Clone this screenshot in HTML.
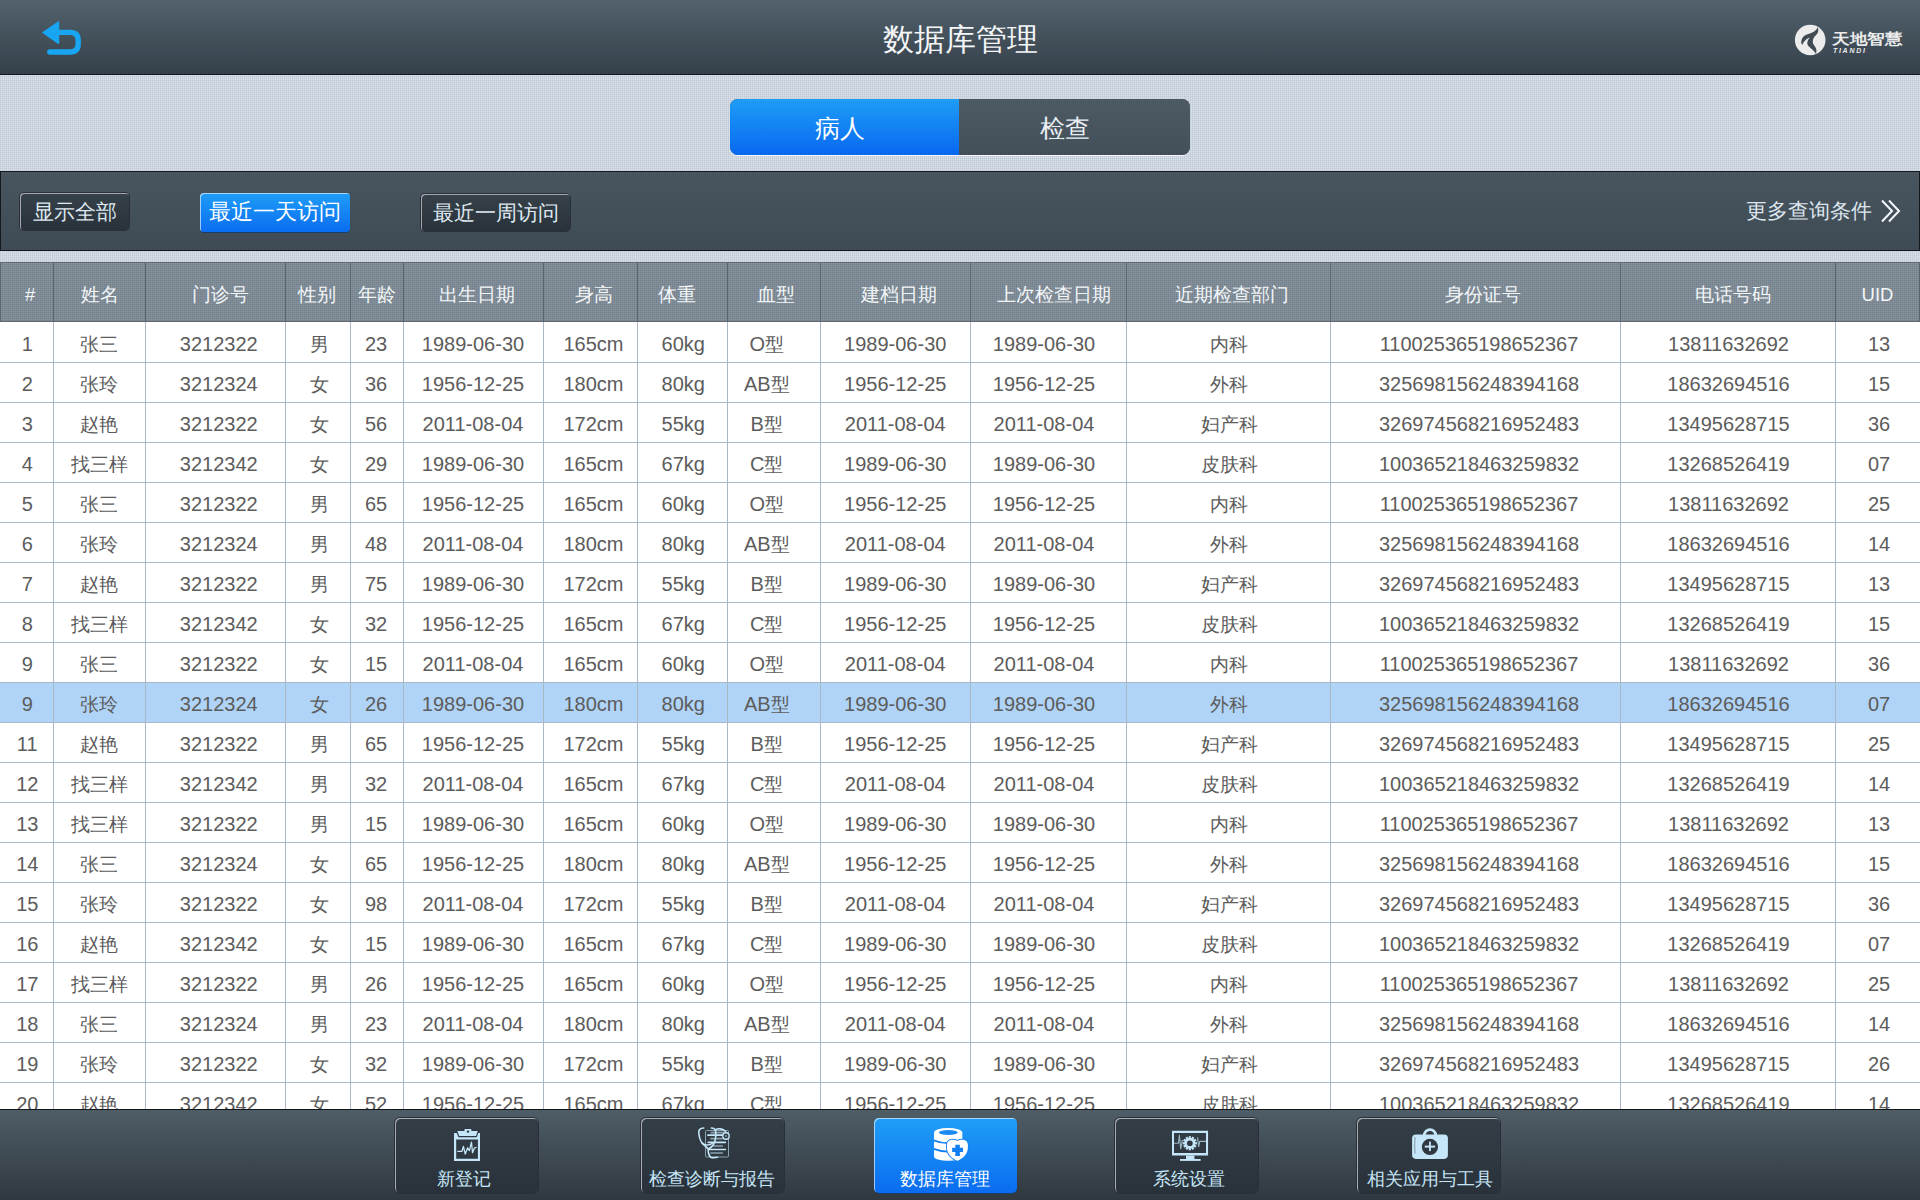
<!DOCTYPE html>
<html><head><meta charset="utf-8">
<style>
*{box-sizing:border-box;margin:0;padding:0}
html,body{width:1920px;height:1200px;overflow:hidden;background:#d0d8e1;font-family:"Liberation Sans",sans-serif}
.abs{position:absolute}
#top{position:absolute;left:0;top:0;width:1920px;height:75px;background:linear-gradient(#52626d,#35404a);border-bottom:1px solid #171b1f}
#title{position:absolute;left:0;top:0;width:1920px;height:75px;line-height:80px;text-align:center;color:#f4f6f8;font-size:31px}
#tex1,#tex2{position:absolute;left:0;top:75px;width:1920px;height:96px;background-color:#d9e1ea;
 background-image:repeating-linear-gradient(90deg,rgba(0,20,60,.06) 0 1px,transparent 1px 2px),repeating-linear-gradient(0deg,rgba(0,20,60,.06) 0 1px,transparent 1px 2px)}
#seg{position:absolute;left:730px;top:99px;width:460px;height:56px;border-radius:8px;overflow:hidden;background:#48545e;box-shadow:0 1px 0 rgba(255,255,255,.8)}
#seg .l{position:absolute;left:0;top:0;width:229px;height:56px;background:linear-gradient(#1e9df6,#0868f0);color:#fff;text-align:center;line-height:58px;font-size:25px;padding-right:9px}
#seg .r{position:absolute;left:229px;top:0;width:231px;height:56px;background:linear-gradient(#4d5963,#434f59);color:#e9eef2;text-align:center;line-height:58px;font-size:25px;padding-right:19px}
#fbar{position:absolute;left:0;top:171px;width:1920px;height:80px;background:linear-gradient(#48555f,#3f4b54);border-top:1px solid #15191c;border-bottom:1px solid #15191c;border-left:1px solid #15191c;border-right:1px solid #15191c}
.btn{position:absolute;height:37px;border-radius:4px;background:linear-gradient(#36414a,#29323a);box-shadow:inset 1px 1px 0 #a3a8ad, 0 0 0 1px #2b2f3a;color:#dfe8f0;font-size:21px;text-align:center;line-height:38px}
.btn.blue{background:linear-gradient(#1f9df7,#0a6df0);box-shadow:inset 1px 1px 0 rgba(255,255,255,.6), 0 1px 0 #1b3d66;color:#fff}
#more{position:absolute;left:1746px;top:196px;font-size:21px;color:#dde6ee;line-height:30px}
#tex2{top:251px;height:11px}
#thead{position:absolute;left:0;top:262px;width:1920px;height:60px;background-color:#87949e;background-image:repeating-linear-gradient(90deg,rgba(0,10,30,.07) 0 1px,transparent 1px 2px),repeating-linear-gradient(0deg,rgba(0,10,30,.07) 0 1px,transparent 1px 2px);border-top:1px solid #666c71;border-bottom:1px solid #62686e}
.hvl{position:absolute;top:0;width:1px;height:58px;background:#5f656b}
.hc{position:absolute;top:0;height:58px;line-height:64px;text-align:center;color:#f3f6f8;font-size:18.5px}
#tbody{position:absolute;left:0;top:322px;width:1920px;height:787px;background:#fff;overflow:hidden}
.row{position:absolute;left:0;width:1920px;height:40px;border-bottom:1px solid #a8b8c6}
.row.hl{background:#b0d4f7}
.c{position:absolute;top:0;height:39px;line-height:42px;text-align:center;color:#5c5c5c;font-size:20px;white-space:nowrap}
.c b{font-weight:normal;font-size:19px}
.vl{position:absolute;top:0;width:1px;height:787px;background:#a8b8c6}
#bbar{position:absolute;left:0;top:1109px;width:1920px;height:91px;background:linear-gradient(#4f5d67,#2f383f);border-top:1px solid #121518}
.nb{position:absolute;top:8px;width:143px;height:75px;border-radius:5px;background:linear-gradient(#343e47,#29323a);box-shadow:inset 1px 1px 0 #a7acb1, 0 0 0 1px #2a2e38;color:#c6e6f8;font-size:17.5px;text-align:center}
.nb.blue{background:linear-gradient(#1f9ef7,#0a6cf0);box-shadow:inset 1px 1px 0 rgba(255,255,255,.6),0 1px 0 #1b3d66;color:#fff}
.nb span{position:absolute;left:0;width:100%;top:50px;line-height:22px}
.nb svg{position:absolute;left:0;top:0}
</style></head><body>
<div id="top">
 <svg class="abs" style="left:0;top:0" width="120" height="75" viewBox="0 0 120 75">
  <path d="M43,32.5 L58.5,22 L58.5,43.3 Z" fill="#18a6f3" stroke="#18a6f3" stroke-width="1.5" stroke-linejoin="round"/>
  <path d="M57,32.4 H70 Q78.2,32.4 78.2,40.5 V44 Q78.2,52 70,52 H49.8" fill="none" stroke="#18a6f3" stroke-width="5.4" stroke-linecap="round" stroke-linejoin="round"/>
 </svg>
 <div id="title">数据库管理</div>
 <svg class="abs" style="left:1780px;top:10px" width="50" height="60" viewBox="1780 10 50 60">
  <circle cx="1810.2" cy="40" r="15.3" fill="#ececec"/>
  <path d="M1817.7,27.3 C1819,30 1818,33 1816.7,34.3 C1814.5,36.5 1812.8,38.5 1812.7,41.7 C1812.7,44.5 1816,47 1816.3,49.3 C1816.6,51 1816.3,53 1816,54 C1815,52 1813,50 1810.5,48 C1808,46 1807,44 1807.3,42.7 C1807.5,40.5 1808.5,38.7 1810,37.7 C1808,38 1806.5,39 1805.7,40 C1804,41.5 1802.8,43.5 1802.3,45 C1801.3,44 1801,42.5 1801.3,41.3 C1801.8,39 1802.5,37.5 1803.3,36.7 C1804.8,35 1806.5,34.5 1808.3,34 C1810.5,33.3 1812,32.8 1813.3,32 C1815,31 1816.2,30 1816.7,29 C1817,28.5 1817.5,27.8 1817.7,27.3 Z" fill="#3f4a53"/>
 </svg>
 <div class="abs" style="left:1832px;top:29px;font-size:15px;line-height:20px;font-weight:bold;color:#ececec;white-space:nowrap;transform:scaleX(1.17);transform-origin:0 0">天地智慧</div>
 <div class="abs" style="left:1833px;top:46px;font-size:7px;line-height:9px;font-weight:bold;font-style:italic;color:#ececec;letter-spacing:1.7px">TIANDI</div>
</div>
<div id="tex1"></div>
<div id="seg"><div class="l">病人</div><div class="r">检查</div></div>
<div id="fbar"></div>
<div class="btn" style="left:20px;top:193px;width:109px">显示全部</div>
<div class="btn blue" style="left:200px;top:193px;width:150px;height:39px;line-height:39px;font-size:21.5px;font-weight:500">最近一天访问</div>
<div class="btn" style="left:421px;top:194px;width:149px">最近一周访问</div>
<div id="more">更多查询条件</div>
<svg class="abs" style="left:1876px;top:195px" width="30" height="32" viewBox="1876 195 30 32">
 <path d="M1882,200.5 L1892,211 L1882,221.5 M1889,200.5 L1899,211 L1889,221.5" fill="none" stroke="#f4f7fa" stroke-width="2"/>
</svg>
<div id="tex2"></div>
<div id="thead"><div class="hvl" style="left:0px"></div><div class="hvl" style="left:53px"></div><div class="hvl" style="left:145px"></div><div class="hvl" style="left:285px"></div><div class="hvl" style="left:350px"></div><div class="hvl" style="left:403px"></div><div class="hvl" style="left:543px"></div><div class="hvl" style="left:637px"></div><div class="hvl" style="left:727px"></div><div class="hvl" style="left:820px"></div><div class="hvl" style="left:970px"></div><div class="hvl" style="left:1126px"></div><div class="hvl" style="left:1330px"></div><div class="hvl" style="left:1620px"></div><div class="hvl" style="left:1835px"></div><div class="hvl" style="left:1919px"></div><div class="hc" style="left:3.75px;width:53px">#</div><div class="hc" style="left:53.5px;width:92px">姓名</div><div class="hc" style="left:150px;width:140px">门诊号</div><div class="hc" style="left:284.25px;width:65px">性别</div><div class="hc" style="left:350px;width:53px">年龄</div><div class="hc" style="left:407.1px;width:140px">出生日期</div><div class="hc" style="left:547.4px;width:94px">身高</div><div class="hc" style="left:631.9px;width:90px">体重</div><div class="hc" style="left:729.4px;width:93px">血型</div><div class="hc" style="left:824.25px;width:150px">建档日期</div><div class="hc" style="left:975.75px;width:156px">上次检查日期</div><div class="hc" style="left:1129.6px;width:204px">近期检查部门</div><div class="hc" style="left:1337.9px;width:290px">身份证号</div><div class="hc" style="left:1625.4px;width:215px">电话号码</div><div class="hc" style="left:1835px;width:85px">UID</div></div>
<div id="tbody">
<div class="row" style="top:1px"><div class="c" style="left:0.75px;width:53px">1</div><div class="c" style="left:53.4px;width:92px"><b>张三</b></div><div class="c" style="left:148.75px;width:140px">3212322</div><div class="c" style="left:287px;width:65px"><b>男</b></div><div class="c" style="left:349.5px;width:53px">23</div><div class="c" style="left:403px;width:140px">1989-06-30</div><div class="c" style="left:546.5px;width:94px">165cm</div><div class="c" style="left:638.25px;width:90px">60kg</div><div class="c" style="left:720.25px;width:93px">O<b>型</b></div><div class="c" style="left:820.25px;width:150px">1989-06-30</div><div class="c" style="left:966px;width:156px">1989-06-30</div><div class="c" style="left:1127.25px;width:204px"><b>内科</b></div><div class="c" style="left:1334px;width:290px">110025365198652367</div><div class="c" style="left:1621px;width:215px">13811632692</div><div class="c" style="left:1836.5px;width:85px">13</div></div>
<div class="row" style="top:41px"><div class="c" style="left:0.75px;width:53px">2</div><div class="c" style="left:53.4px;width:92px"><b>张玲</b></div><div class="c" style="left:148.75px;width:140px">3212324</div><div class="c" style="left:287px;width:65px"><b>女</b></div><div class="c" style="left:349.5px;width:53px">36</div><div class="c" style="left:403px;width:140px">1956-12-25</div><div class="c" style="left:546.5px;width:94px">180cm</div><div class="c" style="left:638.25px;width:90px">80kg</div><div class="c" style="left:720.25px;width:93px">AB<b>型</b></div><div class="c" style="left:820.25px;width:150px">1956-12-25</div><div class="c" style="left:966px;width:156px">1956-12-25</div><div class="c" style="left:1127.25px;width:204px"><b>外科</b></div><div class="c" style="left:1334px;width:290px">325698156248394168</div><div class="c" style="left:1621px;width:215px">18632694516</div><div class="c" style="left:1836.5px;width:85px">15</div></div>
<div class="row" style="top:81px"><div class="c" style="left:0.75px;width:53px">3</div><div class="c" style="left:53.4px;width:92px"><b>赵艳</b></div><div class="c" style="left:148.75px;width:140px">3212322</div><div class="c" style="left:287px;width:65px"><b>女</b></div><div class="c" style="left:349.5px;width:53px">56</div><div class="c" style="left:403px;width:140px">2011-08-04</div><div class="c" style="left:546.5px;width:94px">172cm</div><div class="c" style="left:638.25px;width:90px">55kg</div><div class="c" style="left:720.25px;width:93px">B<b>型</b></div><div class="c" style="left:820.25px;width:150px">2011-08-04</div><div class="c" style="left:966px;width:156px">2011-08-04</div><div class="c" style="left:1127.25px;width:204px"><b>妇产科</b></div><div class="c" style="left:1334px;width:290px">326974568216952483</div><div class="c" style="left:1621px;width:215px">13495628715</div><div class="c" style="left:1836.5px;width:85px">36</div></div>
<div class="row" style="top:121px"><div class="c" style="left:0.75px;width:53px">4</div><div class="c" style="left:53.4px;width:92px"><b>找三样</b></div><div class="c" style="left:148.75px;width:140px">3212342</div><div class="c" style="left:287px;width:65px"><b>女</b></div><div class="c" style="left:349.5px;width:53px">29</div><div class="c" style="left:403px;width:140px">1989-06-30</div><div class="c" style="left:546.5px;width:94px">165cm</div><div class="c" style="left:638.25px;width:90px">67kg</div><div class="c" style="left:720.25px;width:93px">C<b>型</b></div><div class="c" style="left:820.25px;width:150px">1989-06-30</div><div class="c" style="left:966px;width:156px">1989-06-30</div><div class="c" style="left:1127.25px;width:204px"><b>皮肤科</b></div><div class="c" style="left:1334px;width:290px">100365218463259832</div><div class="c" style="left:1621px;width:215px">13268526419</div><div class="c" style="left:1836.5px;width:85px">07</div></div>
<div class="row" style="top:161px"><div class="c" style="left:0.75px;width:53px">5</div><div class="c" style="left:53.4px;width:92px"><b>张三</b></div><div class="c" style="left:148.75px;width:140px">3212322</div><div class="c" style="left:287px;width:65px"><b>男</b></div><div class="c" style="left:349.5px;width:53px">65</div><div class="c" style="left:403px;width:140px">1956-12-25</div><div class="c" style="left:546.5px;width:94px">165cm</div><div class="c" style="left:638.25px;width:90px">60kg</div><div class="c" style="left:720.25px;width:93px">O<b>型</b></div><div class="c" style="left:820.25px;width:150px">1956-12-25</div><div class="c" style="left:966px;width:156px">1956-12-25</div><div class="c" style="left:1127.25px;width:204px"><b>内科</b></div><div class="c" style="left:1334px;width:290px">110025365198652367</div><div class="c" style="left:1621px;width:215px">13811632692</div><div class="c" style="left:1836.5px;width:85px">25</div></div>
<div class="row" style="top:201px"><div class="c" style="left:0.75px;width:53px">6</div><div class="c" style="left:53.4px;width:92px"><b>张玲</b></div><div class="c" style="left:148.75px;width:140px">3212324</div><div class="c" style="left:287px;width:65px"><b>男</b></div><div class="c" style="left:349.5px;width:53px">48</div><div class="c" style="left:403px;width:140px">2011-08-04</div><div class="c" style="left:546.5px;width:94px">180cm</div><div class="c" style="left:638.25px;width:90px">80kg</div><div class="c" style="left:720.25px;width:93px">AB<b>型</b></div><div class="c" style="left:820.25px;width:150px">2011-08-04</div><div class="c" style="left:966px;width:156px">2011-08-04</div><div class="c" style="left:1127.25px;width:204px"><b>外科</b></div><div class="c" style="left:1334px;width:290px">325698156248394168</div><div class="c" style="left:1621px;width:215px">18632694516</div><div class="c" style="left:1836.5px;width:85px">14</div></div>
<div class="row" style="top:241px"><div class="c" style="left:0.75px;width:53px">7</div><div class="c" style="left:53.4px;width:92px"><b>赵艳</b></div><div class="c" style="left:148.75px;width:140px">3212322</div><div class="c" style="left:287px;width:65px"><b>男</b></div><div class="c" style="left:349.5px;width:53px">75</div><div class="c" style="left:403px;width:140px">1989-06-30</div><div class="c" style="left:546.5px;width:94px">172cm</div><div class="c" style="left:638.25px;width:90px">55kg</div><div class="c" style="left:720.25px;width:93px">B<b>型</b></div><div class="c" style="left:820.25px;width:150px">1989-06-30</div><div class="c" style="left:966px;width:156px">1989-06-30</div><div class="c" style="left:1127.25px;width:204px"><b>妇产科</b></div><div class="c" style="left:1334px;width:290px">326974568216952483</div><div class="c" style="left:1621px;width:215px">13495628715</div><div class="c" style="left:1836.5px;width:85px">13</div></div>
<div class="row" style="top:281px"><div class="c" style="left:0.75px;width:53px">8</div><div class="c" style="left:53.4px;width:92px"><b>找三样</b></div><div class="c" style="left:148.75px;width:140px">3212342</div><div class="c" style="left:287px;width:65px"><b>女</b></div><div class="c" style="left:349.5px;width:53px">32</div><div class="c" style="left:403px;width:140px">1956-12-25</div><div class="c" style="left:546.5px;width:94px">165cm</div><div class="c" style="left:638.25px;width:90px">67kg</div><div class="c" style="left:720.25px;width:93px">C<b>型</b></div><div class="c" style="left:820.25px;width:150px">1956-12-25</div><div class="c" style="left:966px;width:156px">1956-12-25</div><div class="c" style="left:1127.25px;width:204px"><b>皮肤科</b></div><div class="c" style="left:1334px;width:290px">100365218463259832</div><div class="c" style="left:1621px;width:215px">13268526419</div><div class="c" style="left:1836.5px;width:85px">15</div></div>
<div class="row" style="top:321px"><div class="c" style="left:0.75px;width:53px">9</div><div class="c" style="left:53.4px;width:92px"><b>张三</b></div><div class="c" style="left:148.75px;width:140px">3212322</div><div class="c" style="left:287px;width:65px"><b>女</b></div><div class="c" style="left:349.5px;width:53px">15</div><div class="c" style="left:403px;width:140px">2011-08-04</div><div class="c" style="left:546.5px;width:94px">165cm</div><div class="c" style="left:638.25px;width:90px">60kg</div><div class="c" style="left:720.25px;width:93px">O<b>型</b></div><div class="c" style="left:820.25px;width:150px">2011-08-04</div><div class="c" style="left:966px;width:156px">2011-08-04</div><div class="c" style="left:1127.25px;width:204px"><b>内科</b></div><div class="c" style="left:1334px;width:290px">110025365198652367</div><div class="c" style="left:1621px;width:215px">13811632692</div><div class="c" style="left:1836.5px;width:85px">36</div></div>
<div class="row hl" style="top:361px"><div class="c" style="left:0.75px;width:53px">9</div><div class="c" style="left:53.4px;width:92px"><b>张玲</b></div><div class="c" style="left:148.75px;width:140px">3212324</div><div class="c" style="left:287px;width:65px"><b>女</b></div><div class="c" style="left:349.5px;width:53px">26</div><div class="c" style="left:403px;width:140px">1989-06-30</div><div class="c" style="left:546.5px;width:94px">180cm</div><div class="c" style="left:638.25px;width:90px">80kg</div><div class="c" style="left:720.25px;width:93px">AB<b>型</b></div><div class="c" style="left:820.25px;width:150px">1989-06-30</div><div class="c" style="left:966px;width:156px">1989-06-30</div><div class="c" style="left:1127.25px;width:204px"><b>外科</b></div><div class="c" style="left:1334px;width:290px">325698156248394168</div><div class="c" style="left:1621px;width:215px">18632694516</div><div class="c" style="left:1836.5px;width:85px">07</div></div>
<div class="row" style="top:401px"><div class="c" style="left:0.75px;width:53px">11</div><div class="c" style="left:53.4px;width:92px"><b>赵艳</b></div><div class="c" style="left:148.75px;width:140px">3212322</div><div class="c" style="left:287px;width:65px"><b>男</b></div><div class="c" style="left:349.5px;width:53px">65</div><div class="c" style="left:403px;width:140px">1956-12-25</div><div class="c" style="left:546.5px;width:94px">172cm</div><div class="c" style="left:638.25px;width:90px">55kg</div><div class="c" style="left:720.25px;width:93px">B<b>型</b></div><div class="c" style="left:820.25px;width:150px">1956-12-25</div><div class="c" style="left:966px;width:156px">1956-12-25</div><div class="c" style="left:1127.25px;width:204px"><b>妇产科</b></div><div class="c" style="left:1334px;width:290px">326974568216952483</div><div class="c" style="left:1621px;width:215px">13495628715</div><div class="c" style="left:1836.5px;width:85px">25</div></div>
<div class="row" style="top:441px"><div class="c" style="left:0.75px;width:53px">12</div><div class="c" style="left:53.4px;width:92px"><b>找三样</b></div><div class="c" style="left:148.75px;width:140px">3212342</div><div class="c" style="left:287px;width:65px"><b>男</b></div><div class="c" style="left:349.5px;width:53px">32</div><div class="c" style="left:403px;width:140px">2011-08-04</div><div class="c" style="left:546.5px;width:94px">165cm</div><div class="c" style="left:638.25px;width:90px">67kg</div><div class="c" style="left:720.25px;width:93px">C<b>型</b></div><div class="c" style="left:820.25px;width:150px">2011-08-04</div><div class="c" style="left:966px;width:156px">2011-08-04</div><div class="c" style="left:1127.25px;width:204px"><b>皮肤科</b></div><div class="c" style="left:1334px;width:290px">100365218463259832</div><div class="c" style="left:1621px;width:215px">13268526419</div><div class="c" style="left:1836.5px;width:85px">14</div></div>
<div class="row" style="top:481px"><div class="c" style="left:0.75px;width:53px">13</div><div class="c" style="left:53.4px;width:92px"><b>找三样</b></div><div class="c" style="left:148.75px;width:140px">3212322</div><div class="c" style="left:287px;width:65px"><b>男</b></div><div class="c" style="left:349.5px;width:53px">15</div><div class="c" style="left:403px;width:140px">1989-06-30</div><div class="c" style="left:546.5px;width:94px">165cm</div><div class="c" style="left:638.25px;width:90px">60kg</div><div class="c" style="left:720.25px;width:93px">O<b>型</b></div><div class="c" style="left:820.25px;width:150px">1989-06-30</div><div class="c" style="left:966px;width:156px">1989-06-30</div><div class="c" style="left:1127.25px;width:204px"><b>内科</b></div><div class="c" style="left:1334px;width:290px">110025365198652367</div><div class="c" style="left:1621px;width:215px">13811632692</div><div class="c" style="left:1836.5px;width:85px">13</div></div>
<div class="row" style="top:521px"><div class="c" style="left:0.75px;width:53px">14</div><div class="c" style="left:53.4px;width:92px"><b>张三</b></div><div class="c" style="left:148.75px;width:140px">3212324</div><div class="c" style="left:287px;width:65px"><b>女</b></div><div class="c" style="left:349.5px;width:53px">65</div><div class="c" style="left:403px;width:140px">1956-12-25</div><div class="c" style="left:546.5px;width:94px">180cm</div><div class="c" style="left:638.25px;width:90px">80kg</div><div class="c" style="left:720.25px;width:93px">AB<b>型</b></div><div class="c" style="left:820.25px;width:150px">1956-12-25</div><div class="c" style="left:966px;width:156px">1956-12-25</div><div class="c" style="left:1127.25px;width:204px"><b>外科</b></div><div class="c" style="left:1334px;width:290px">325698156248394168</div><div class="c" style="left:1621px;width:215px">18632694516</div><div class="c" style="left:1836.5px;width:85px">15</div></div>
<div class="row" style="top:561px"><div class="c" style="left:0.75px;width:53px">15</div><div class="c" style="left:53.4px;width:92px"><b>张玲</b></div><div class="c" style="left:148.75px;width:140px">3212322</div><div class="c" style="left:287px;width:65px"><b>女</b></div><div class="c" style="left:349.5px;width:53px">98</div><div class="c" style="left:403px;width:140px">2011-08-04</div><div class="c" style="left:546.5px;width:94px">172cm</div><div class="c" style="left:638.25px;width:90px">55kg</div><div class="c" style="left:720.25px;width:93px">B<b>型</b></div><div class="c" style="left:820.25px;width:150px">2011-08-04</div><div class="c" style="left:966px;width:156px">2011-08-04</div><div class="c" style="left:1127.25px;width:204px"><b>妇产科</b></div><div class="c" style="left:1334px;width:290px">326974568216952483</div><div class="c" style="left:1621px;width:215px">13495628715</div><div class="c" style="left:1836.5px;width:85px">36</div></div>
<div class="row" style="top:601px"><div class="c" style="left:0.75px;width:53px">16</div><div class="c" style="left:53.4px;width:92px"><b>赵艳</b></div><div class="c" style="left:148.75px;width:140px">3212342</div><div class="c" style="left:287px;width:65px"><b>女</b></div><div class="c" style="left:349.5px;width:53px">15</div><div class="c" style="left:403px;width:140px">1989-06-30</div><div class="c" style="left:546.5px;width:94px">165cm</div><div class="c" style="left:638.25px;width:90px">67kg</div><div class="c" style="left:720.25px;width:93px">C<b>型</b></div><div class="c" style="left:820.25px;width:150px">1989-06-30</div><div class="c" style="left:966px;width:156px">1989-06-30</div><div class="c" style="left:1127.25px;width:204px"><b>皮肤科</b></div><div class="c" style="left:1334px;width:290px">100365218463259832</div><div class="c" style="left:1621px;width:215px">13268526419</div><div class="c" style="left:1836.5px;width:85px">07</div></div>
<div class="row" style="top:641px"><div class="c" style="left:0.75px;width:53px">17</div><div class="c" style="left:53.4px;width:92px"><b>找三样</b></div><div class="c" style="left:148.75px;width:140px">3212322</div><div class="c" style="left:287px;width:65px"><b>男</b></div><div class="c" style="left:349.5px;width:53px">26</div><div class="c" style="left:403px;width:140px">1956-12-25</div><div class="c" style="left:546.5px;width:94px">165cm</div><div class="c" style="left:638.25px;width:90px">60kg</div><div class="c" style="left:720.25px;width:93px">O<b>型</b></div><div class="c" style="left:820.25px;width:150px">1956-12-25</div><div class="c" style="left:966px;width:156px">1956-12-25</div><div class="c" style="left:1127.25px;width:204px"><b>内科</b></div><div class="c" style="left:1334px;width:290px">110025365198652367</div><div class="c" style="left:1621px;width:215px">13811632692</div><div class="c" style="left:1836.5px;width:85px">25</div></div>
<div class="row" style="top:681px"><div class="c" style="left:0.75px;width:53px">18</div><div class="c" style="left:53.4px;width:92px"><b>张三</b></div><div class="c" style="left:148.75px;width:140px">3212324</div><div class="c" style="left:287px;width:65px"><b>男</b></div><div class="c" style="left:349.5px;width:53px">23</div><div class="c" style="left:403px;width:140px">2011-08-04</div><div class="c" style="left:546.5px;width:94px">180cm</div><div class="c" style="left:638.25px;width:90px">80kg</div><div class="c" style="left:720.25px;width:93px">AB<b>型</b></div><div class="c" style="left:820.25px;width:150px">2011-08-04</div><div class="c" style="left:966px;width:156px">2011-08-04</div><div class="c" style="left:1127.25px;width:204px"><b>外科</b></div><div class="c" style="left:1334px;width:290px">325698156248394168</div><div class="c" style="left:1621px;width:215px">18632694516</div><div class="c" style="left:1836.5px;width:85px">14</div></div>
<div class="row" style="top:721px"><div class="c" style="left:0.75px;width:53px">19</div><div class="c" style="left:53.4px;width:92px"><b>张玲</b></div><div class="c" style="left:148.75px;width:140px">3212322</div><div class="c" style="left:287px;width:65px"><b>女</b></div><div class="c" style="left:349.5px;width:53px">32</div><div class="c" style="left:403px;width:140px">1989-06-30</div><div class="c" style="left:546.5px;width:94px">172cm</div><div class="c" style="left:638.25px;width:90px">55kg</div><div class="c" style="left:720.25px;width:93px">B<b>型</b></div><div class="c" style="left:820.25px;width:150px">1989-06-30</div><div class="c" style="left:966px;width:156px">1989-06-30</div><div class="c" style="left:1127.25px;width:204px"><b>妇产科</b></div><div class="c" style="left:1334px;width:290px">326974568216952483</div><div class="c" style="left:1621px;width:215px">13495628715</div><div class="c" style="left:1836.5px;width:85px">26</div></div>
<div class="row" style="top:761px"><div class="c" style="left:0.75px;width:53px">20</div><div class="c" style="left:53.4px;width:92px"><b>赵艳</b></div><div class="c" style="left:148.75px;width:140px">3212342</div><div class="c" style="left:287px;width:65px"><b>女</b></div><div class="c" style="left:349.5px;width:53px">52</div><div class="c" style="left:403px;width:140px">1956-12-25</div><div class="c" style="left:546.5px;width:94px">165cm</div><div class="c" style="left:638.25px;width:90px">67kg</div><div class="c" style="left:720.25px;width:93px">C<b>型</b></div><div class="c" style="left:820.25px;width:150px">1956-12-25</div><div class="c" style="left:966px;width:156px">1956-12-25</div><div class="c" style="left:1127.25px;width:204px"><b>皮肤科</b></div><div class="c" style="left:1334px;width:290px">100365218463259832</div><div class="c" style="left:1621px;width:215px">13268526419</div><div class="c" style="left:1836.5px;width:85px">14</div></div>
<div class="vl" style="left:53px"></div><div class="vl" style="left:145px"></div><div class="vl" style="left:285px"></div><div class="vl" style="left:350px"></div><div class="vl" style="left:403px"></div><div class="vl" style="left:543px"></div><div class="vl" style="left:637px"></div><div class="vl" style="left:727px"></div><div class="vl" style="left:820px"></div><div class="vl" style="left:970px"></div><div class="vl" style="left:1126px"></div><div class="vl" style="left:1330px"></div><div class="vl" style="left:1620px"></div><div class="vl" style="left:1835px"></div>
</div>
<div id="bbar">
 <div class="nb" style="left:395px"><span style="left:-2.5px">新登记</span></div>
 <div class="nb" style="left:641px"><span style="left:-1px">检查诊断与报告</span></div>
 <div class="nb blue" style="left:874px"><span style="left:-1px">数据库管理</span></div>
 <div class="nb" style="left:1115px"><span style="left:2.5px">系统设置</span></div>
 <div class="nb" style="left:1357px"><span style="left:1px">相关应用与工具</span></div>
 <svg class="abs" style="left:0;top:-1px" width="1920" height="91" viewBox="0 1109 1920 91">
  <!-- clipboard -->
  <path d="M454,1133.1 H480 V1161.1 H454 Z M456.2,1139.4 V1158.8 H477.9 V1139.4 Z" fill-rule="evenodd" fill="#c4e6f8"/>
  <path d="M457.3,1131 H464.5 V1128.9 H471.3 V1131 H477.75 L476,1136.1 H459.2 Z" fill="#c4e6f8" stroke="#2f3840" stroke-width="2.2" paint-order="stroke" stroke-linejoin="round"/>
  <circle cx="468" cy="1131.6" r="1.2" fill="#2f3840"/>
  <polyline points="457.3,1151.3 462,1151.3 463.4,1146.4 465.3,1154.1 467.6,1147.8 469.4,1150.6 471.5,1142.2 472.5,1152.7 474.6,1147.8 476.5,1147.3" fill="none" stroke="#c4e6f8" stroke-width="1.3" stroke-linejoin="round"/>
  <!-- stethoscope doc -->
  <rect x="705.5" y="1130.5" width="23" height="26.5" rx="1" fill="none" stroke="#8aa2b0" stroke-width="1"/>
  <g stroke-width="1.7" stroke-linecap="round">
   <line x1="711.3" y1="1132.6" x2="723" y2="1132.6" stroke="#8aa2b0"/>
   <line x1="708" y1="1135.2" x2="723.3" y2="1135.2" stroke="#c4e6f8"/>
   <line x1="711" y1="1138.7" x2="722" y2="1138.7" stroke="#8aa2b0"/>
   <line x1="708.3" y1="1142.3" x2="725.3" y2="1142.3" stroke="#c4e6f8"/>
   <line x1="713.7" y1="1146" x2="722.3" y2="1146" stroke="#8aa2b0"/>
   <line x1="709" y1="1149.5" x2="725.3" y2="1149.5" stroke="#c4e6f8"/>
   <line x1="711" y1="1153" x2="722.3" y2="1153" stroke="#8aa2b0"/>
  </g>
  <g fill="none" stroke="#c4e6f8" stroke-width="1.6" stroke-linecap="round">
   <path d="M703.7,1128 C700,1128 698.5,1130 698.8,1133 C699.3,1138 700.5,1142 703.3,1144.3 C705,1146 707,1147.5 708.3,1149"/>
   <path d="M711.3,1128 C714,1128 715.5,1129.5 715.7,1132 C716,1137 715,1142 713.5,1144.5 C712,1147 710,1148.3 708.3,1149"/>
   <path d="M702.3,1143 C704,1145.5 709,1146 712.7,1143"/>
   <path d="M708.3,1149 C708,1152 708.5,1155 710.7,1157.2 C712.5,1158 715,1157.8 717.3,1157.3"/>
   <path d="M715.5,1129.7 C718,1128 723,1128.5 725.5,1131.5"/>
  </g>
  <circle cx="726" cy="1136" r="3.2" fill="#2f3840" stroke="#c4e6f8" stroke-width="1.4"/>
  <circle cx="726" cy="1136" r="1" fill="#8aa2b0"/>
  <!-- database -->
  <g fill="#fff">
   <ellipse cx="948.15" cy="1132.6" rx="14.15" ry="4.7"/>
   <rect x="934" y="1132.6" width="28.3" height="23.8"/>
   <ellipse cx="948.15" cy="1156.5" rx="14.15" ry="4.3"/>
  </g>
  <ellipse cx="948.3" cy="1132.5" rx="9.4" ry="2.45" fill="#1a8af3"/>
  <path d="M933.5,1140.35 Q948.15,1146 962.8,1140.35" fill="none" stroke="#1585f2" stroke-width="1.7"/>
  <path d="M933.5,1148.9 Q948.15,1154.4 962.8,1148.9" fill="none" stroke="#0f7ef1" stroke-width="1.7"/>
  <path d="M957.4,1141 C955,1139.5 950,1139 948,1141.5 C946.5,1143.5 946.7,1147 947.2,1150 C948.2,1155 952,1158.5 957.4,1160.8 C962.8,1158.5 966.6,1155 967.6,1150 C968.1,1147 968.3,1143.5 966.8,1141.5 C964.8,1139 959.8,1139.5 957.4,1141 Z" fill="#fff" stroke="#1283f2" stroke-width="1.8" paint-order="stroke"/>
  <path d="M955.3,1144.7 H959.85 V1147.85 H963 V1152.05 H959.85 V1155.9 H955.3 V1152.05 H952.15 V1147.85 H955.3 Z" fill="#117ff2"/>
  <!-- monitor -->
  <path d="M1172,1130.75 H1208.07 V1155.6 H1172 Z M1174,1133 V1152.9 H1206 V1133 Z" fill-rule="evenodd" fill="#c4e6f8"/>
  <rect x="1186" y="1155.5" width="8.45" height="3.6" fill="#c4e6f8"/>
  <rect x="1180" y="1159" width="20.6" height="1.9" fill="#c4e6f8"/>
  <polyline points="1174,1143.3 1178.5,1143.3 1179.4,1135.2 1180.7,1148.8 1182.4,1139.9" fill="none" stroke="#9cb8c6" stroke-width="1.1" stroke-linejoin="round"/>
  <polyline points="1197.5,1137.4 1198.7,1146.6 1199.7,1141.4 1206,1141.4" fill="none" stroke="#9cb8c6" stroke-width="1.1" stroke-linejoin="round"/>
  <g transform="translate(1189.85,1143.26)">
   <circle r="5.4" fill="#c4e6f8"/>
   <g fill="#c4e6f8">
    <rect x="-1.1" y="-7.1" width="2.2" height="14.2"/>
    <rect x="-1.1" y="-7.1" width="2.2" height="14.2" transform="rotate(30)"/>
    <rect x="-1.1" y="-7.1" width="2.2" height="14.2" transform="rotate(60)"/>
    <rect x="-1.1" y="-7.1" width="2.2" height="14.2" transform="rotate(90)"/>
    <rect x="-1.1" y="-7.1" width="2.2" height="14.2" transform="rotate(120)"/>
    <rect x="-1.1" y="-7.1" width="2.2" height="14.2" transform="rotate(150)"/>
   </g>
   <circle r="2.85" fill="#2f3840"/>
  </g>
  <!-- med kit -->
  <circle cx="1430" cy="1135.3" r="5.7" fill="none" stroke="#c4e6f8" stroke-width="2.7"/>
  <rect x="1412.1" y="1134.5" width="35.8" height="24.4" rx="3.8" fill="#c4e6f8"/>
  <path d="M1415,1137 Q1414.4,1145 1415,1153.5" fill="none" stroke="#5d7583" stroke-width="0.7"/>
  <circle cx="1429.9" cy="1146.9" r="8.1" fill="#2f3840"/>
  <rect x="1429.05" y="1141.6" width="1.8" height="9.5" fill="#c4e6f8"/>
  <rect x="1424.8" y="1145.6" width="10.3" height="2" fill="#c4e6f8"/>
 </svg>
</div>
</body></html>
